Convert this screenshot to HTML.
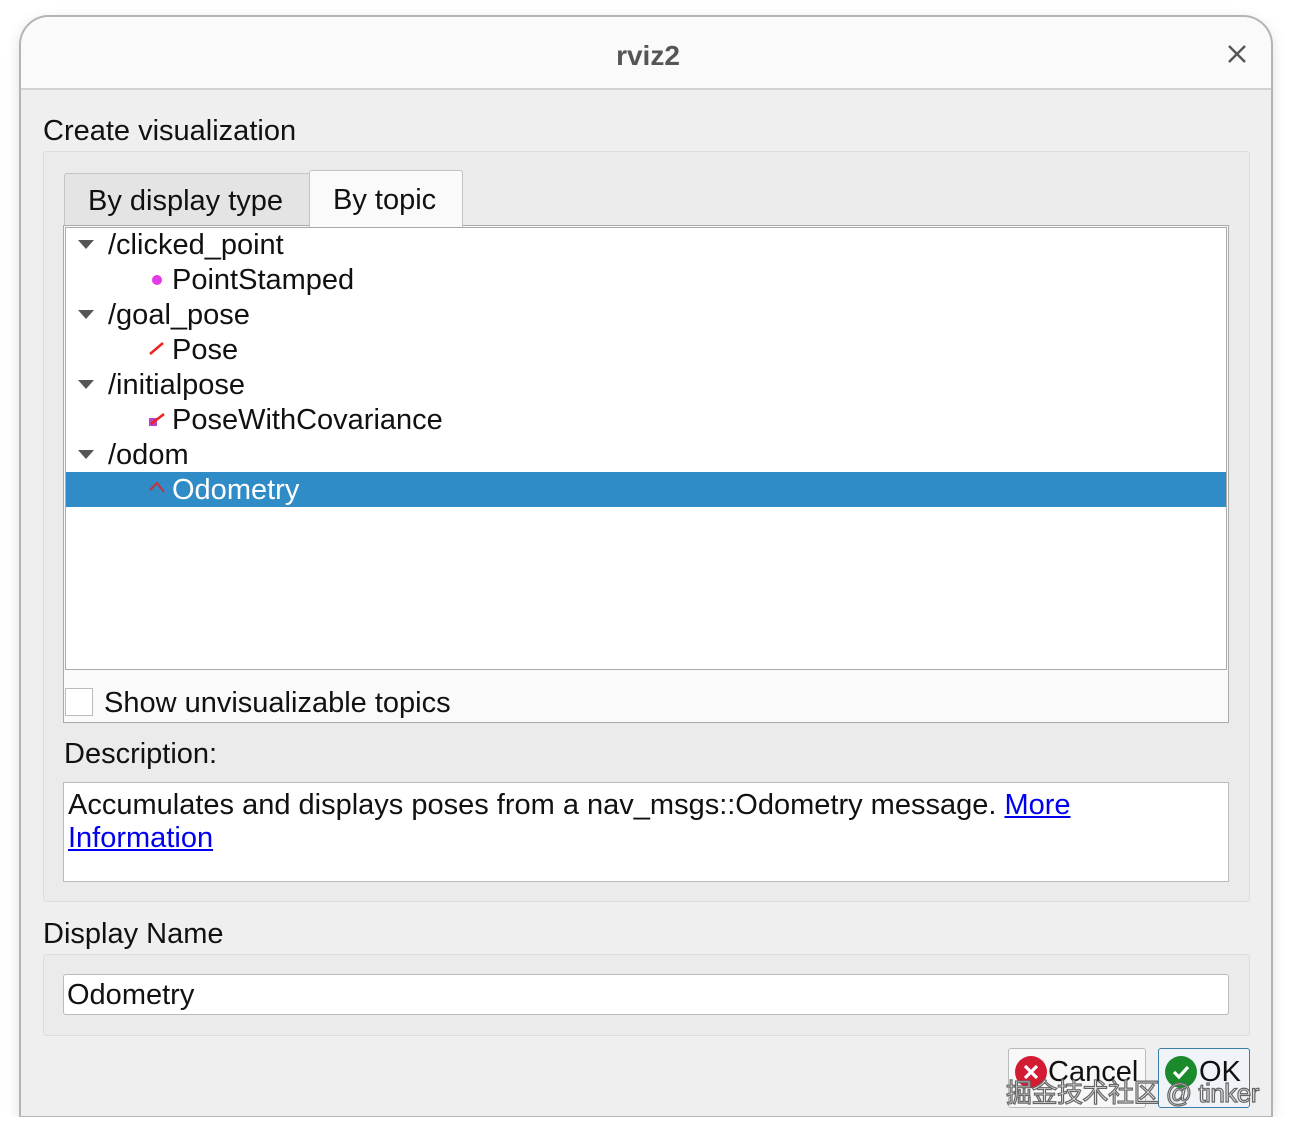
<!DOCTYPE html>
<html><head><meta charset="utf-8"><style>
*{margin:0;padding:0;box-sizing:border-box}
body{width:1292px;height:1136px;background:#fff;position:relative;overflow:hidden;font-family:"Liberation Sans","Noto Sans CJK SC",sans-serif;color:#111;font-size:29px}
.a{position:absolute}
.win{left:19px;top:15px;width:1254px;height:1103px;border:2px solid #b4b4b4;border-radius:30px 30px 0 0;background:#efefef;overflow:hidden;box-shadow:0 4px 14px rgba(0,0,0,.12)}
.title{left:0;top:0;width:1250px;height:73px;background:#fafafa;border-bottom:2px solid #d2d2d2}
.t{white-space:nowrap;line-height:34px}
.tri{width:0;height:0;border-left:8px solid transparent;border-right:8px solid transparent;border-top:9px solid #555}
</style></head><body>
<div class="a win">
 <div class="a title"></div>
 <div class="a t" style="left:0;width:1254px;text-align:center;top:22px;font-weight:bold;color:#555;font-size:28px">rviz2</div>
 <svg class="a" style="left:1206px;top:27px" width="20" height="20"><path d="M2 2L18 18M18 2L2 18" stroke="#555" stroke-width="2.4"/></svg>
</div>
<div class="a t" style="left:43px;top:114px">Create visualization</div>
<div class="a" style="left:43px;top:151px;width:1207px;height:751px;background:#ebebeb;border:1px solid #dcdcdc;border-radius:3px"></div>
<div class="a" style="left:64px;top:173px;width:247px;height:53px;background:#e4e4e4;border:1px solid #c4c4c4;border-bottom:none;border-radius:3px 0 0 0"></div>
<div class="a t" style="left:88px;top:184px">By display type</div>
<div class="a" style="left:63px;top:225px;width:1166px;height:498px;background:#fafafa;border:1px solid #aaa"></div>
<div class="a" style="left:309px;top:170px;width:154px;height:57px;background:#fafafa;border:1px solid #c4c4c4;border-bottom:none;border-radius:3px 3px 0 0"></div>
<div class="a t" style="left:333px;top:183px">By topic</div>
<div class="a" style="left:65px;top:227px;width:1162px;height:443px;background:#fff;border:1px solid #aaa;overflow:hidden">
 <div class="a" style="left:0;top:244px;width:1162px;height:35px;background:#308cc6"></div>
 <div class="a tri" style="left:12px;top:12px"></div>
 <div class="a t" style="left:42px;top:0">/clicked_point</div>
 <div class="a" style="left:86px;top:47px;width:10px;height:10px;border-radius:50%;background:#e33ae6"></div>
 <div class="a t" style="left:106px;top:35px">PointStamped</div>
 <div class="a tri" style="left:12px;top:82px"></div>
 <div class="a t" style="left:42px;top:70px">/goal_pose</div>
 <svg class="a" style="left:82px;top:112px" width="18" height="16"><path d="M2 14L15 3" stroke="#e22" stroke-width="2.5"/></svg>
 <div class="a t" style="left:106px;top:105px">Pose</div>
 <div class="a tri" style="left:12px;top:152px"></div>
 <div class="a t" style="left:42px;top:140px">/initialpose</div>
 <svg class="a" style="left:82px;top:182px" width="18" height="18"><rect x="1" y="8" width="8" height="8" fill="#b845c8"/><path d="M3 14L16 4" stroke="#e22" stroke-width="2.5"/></svg>
 <div class="a t" style="left:106px;top:175px">PoseWithCovariance</div>
 <div class="a tri" style="left:12px;top:222px"></div>
 <div class="a t" style="left:42px;top:210px">/odom</div>
 <svg class="a" style="left:82px;top:252px" width="20" height="16"><path d="M2 10L9 3L16 12" stroke="#c8303a" stroke-width="2" fill="none"/></svg>
 <div class="a t" style="left:106px;top:245px;color:#fff">Odometry</div>
</div>
<div class="a" style="left:65px;top:688px;width:28px;height:28px;background:#fff;border:1px solid #bbb"></div>
<div class="a t" style="left:104px;top:686px">Show unvisualizable topics</div>
<div class="a t" style="left:64px;top:737px">Description:</div>
<div class="a" style="left:63px;top:782px;width:1166px;height:100px;background:#fff;border:1px solid #bbb"></div>
<div class="a t" style="left:68px;top:788px">Accumulates and displays poses from a nav_msgs::Odometry message. <span style="color:#00e;text-decoration:underline">More</span></div>
<div class="a t" style="left:68px;top:821px;color:#00e;text-decoration:underline">Information</div>
<div class="a t" style="left:43px;top:917px">Display Name</div>
<div class="a" style="left:43px;top:954px;width:1207px;height:82px;background:#ebebeb;border:1px solid #dcdcdc;border-radius:3px"></div>
<div class="a" style="left:63px;top:974px;width:1166px;height:41px;background:#fff;border:1px solid #bbb;border-radius:3px"></div>
<div class="a t" style="left:67px;top:978px">Odometry</div>
<div class="a" style="left:1008px;top:1048px;width:138px;height:60px;background:#f8f8f8;border:1px solid #bbb;border-radius:3px"></div>
<div class="a" style="left:1158px;top:1048px;width:92px;height:60px;background:#f0f4f8;border:1px solid #3b7ea8;border-radius:3px"></div>
<svg class="a" style="left:1014px;top:1055px" width="34" height="34"><circle cx="17" cy="17" r="16" fill="#d21c34"/><path d="M11 11L23 23M23 11L11 23" stroke="#fff" stroke-width="3.2"/></svg>
<div class="a t" style="left:1048px;top:1055px">Cancel</div>
<svg class="a" style="left:1164px;top:1055px" width="34" height="34"><circle cx="17" cy="17" r="16" fill="#1a8a2c"/><path d="M10 17L15 22L24 12" stroke="#fff" stroke-width="3.2" fill="none"/></svg>
<div class="a t" style="left:1199px;top:1055px">OK</div>
<div class="a" style="left:0;top:1117px;width:1292px;height:19px;background:#fff"></div>
<div class="a t" style="left:1006px;top:1076px;font-size:26px;letter-spacing:-0.5px;color:#eee;-webkit-text-stroke:1.2px #666">掘金技术社区 @ tinker</div>
</body></html>
